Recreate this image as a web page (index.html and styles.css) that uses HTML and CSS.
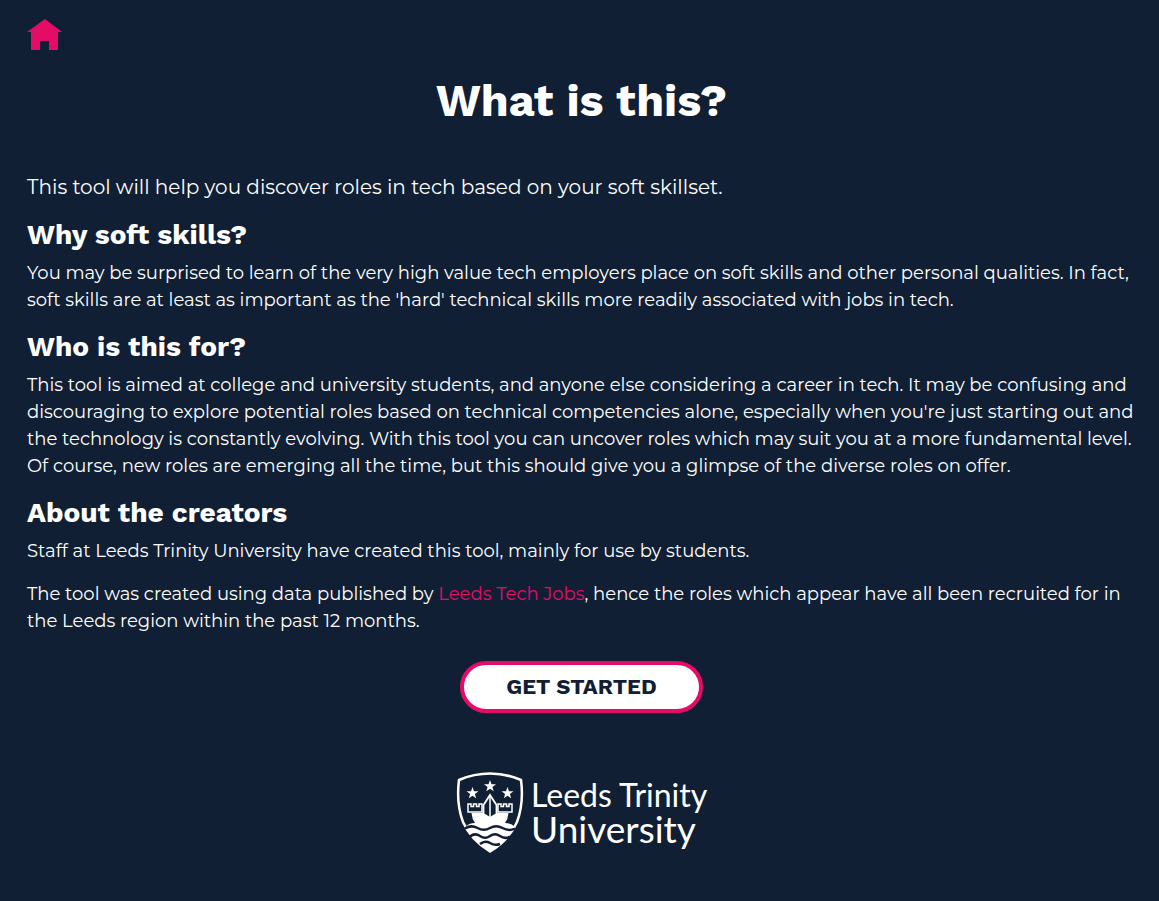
FILE: index.html
```html
<!DOCTYPE html>
<html lang="en">
<head>
<meta charset="utf-8">
<meta name="viewport" content="width=device-width, initial-scale=1">
<title>What is this?</title>
<link rel="stylesheet" href="styles.css">
</head>
<body>
<header class="topbar">
  <a class="home" href="#" aria-label="Home">
    <svg viewBox="0 0 36 32" aria-hidden="true"><path d="M18 1 35 14H31V32H22V23H13V32H4V14H0Z"/></svg>
  </a>
</header>
<main class="content">
  <h1 class="title">What is this?</h1>
  <p class="lead">This tool will help you discover roles in tech based on your soft skillset.</p>
  <h2 class="heading">Why soft skills?</h2>
  <p class="text">You may be surprised to learn of the very high value tech employers place on soft skills and other personal qualities. In fact, soft skills are at least as important as the 'hard' technical skills more readily associated with jobs in tech.</p>
  <h2 class="heading">Who is this for?</h2>
  <p class="text">This tool is aimed at college and university students, and anyone else considering a career in tech. It may be confusing and discouraging to explore potential roles based on technical competencies alone, especially when you're just starting out and the technology is constantly evolving. With this tool you can uncover roles which may suit you at a more fundamental level. Of course, new roles are emerging all the time, but this should give you a glimpse of the diverse roles on offer.</p>
  <h2 class="heading">About the creators</h2>
  <p class="text">Staff at Leeds Trinity University have created this tool, mainly for use by students.</p>
  <p class="text">The tool was created using data published by <a class="link" href="#">Leeds Tech Jobs</a>, hence the roles which appear have all been recruited for in the Leeds region within the past 12 months.</p>
  <div class="actions"><button class="start" type="button">GET STARTED</button></div>
</main>
<footer class="footer">
  <svg class="logo" viewBox="0 0 250 82" role="img" aria-label="Leeds Trinity University">
    <path class="outline" d="M33 1.500Q49 1.500 64 8Q67 31 60 50Q52 68 33 79.500Q14 68 6 50Q-1 31 2 8Q17 1.500 33 1.500Z"/>
    <g class="fill">
      <path id="star" d="M33 8l1.500 4.200 4.500.1-3.600 2.700 1.300 4.300-3.700-2.600-3.700 2.600 1.300-4.300-3.600-2.700 4.500-.1z"/>
      <use href="#star" x="-17.500" y="7"/>
      <use href="#star" x="17.500" y="7"/>
      <path d="M14.500 41H51.500Q51 47 48 51Q54 51 58 55Q50 70 33 79.500Q16 70 8 55Q12 51 18 51Q15 47 14.500 41Z"/>
    </g>
    <path class="castle" d="M11 40v-8h3v2.500h2.500v-2.500h3v2.500h2.500v-2.500h3v8zM41 40v-8h3v2.500h2.500v-2.500h3v2.500h2.500v-2.500h3v8z"/>
    <path class="sail" d="M33 23l6.500 10v9L33 46l-6.500-4V33z"/>
    <path class="mast" d="M33 23v24"/>
    <path class="wave" d="M8 56.500q6-4 12.500-.5t12.500 0 12.500 0 12.500 .5M13 64.500q5-4 10-.5t10 0 10 0 10 .5M23 72q5-4 10-1t10 1"/>
    <text class="wordmark" x="74" y="35">Leeds Trinity</text>
    <text class="wordmark large" x="74" y="71">University</text>
  </svg>
</footer>
</body>
</html>
```
FILE: styles.css
```css
body {
  margin: 0;
  padding: 18px 23px 18px 27px;
  background: #111f34;
  color: #fff;
  font-family: Montserrat, Inter, sans-serif;
}
.home { display: block; width: 36px; }
.home svg { display: block; width: 36px; height: 32px; fill: #e50c68; }
.title {
  margin: 21px 0 41px;
  font: 700 45px/60px "Work Sans", Inter, sans-serif;
  text-align: center;
}
.lead { margin: 0 0 16px; font-size: 20px; line-height: 30px; }
.heading {
  margin: 0 0 8px;
  font: 700 28px/34px "Work Sans", Inter, sans-serif;
}
.text { margin: 0 0 16px; font-size: 18px; line-height: 27px; }
.link { color: #e50c68; text-decoration: none; }
.actions { display: flex; justify-content: center; padding-top: 10px; }
.start {
  padding: 10px 42px;
  border: 4px solid #e50c68;
  border-radius: 26px;
  background: #fff;
  color: #111f34;
  font: 700 22px/24px "Work Sans", Inter, sans-serif;
}
.footer { display: flex; justify-content: center; padding-top: 59px; }
.logo { width: 250px; height: 82px; overflow: visible; }
.fill { fill: #fff; }
.outline { fill: none; stroke: #fff; stroke-width: 2.500; }
.castle { fill: #111f34; stroke: #fff; stroke-width: 1.500; }
.sail { fill: #111f34; stroke: #fff; stroke-width: 1.800; }
.mast { fill: none; stroke: #fff; stroke-width: 1.500; }
.wave { fill: none; stroke: #111f34; stroke-width: 2.500; }
.wordmark { fill: #fff; font: 400 32px Lato, sans-serif; }
.large { font-size: 37px; }
```
